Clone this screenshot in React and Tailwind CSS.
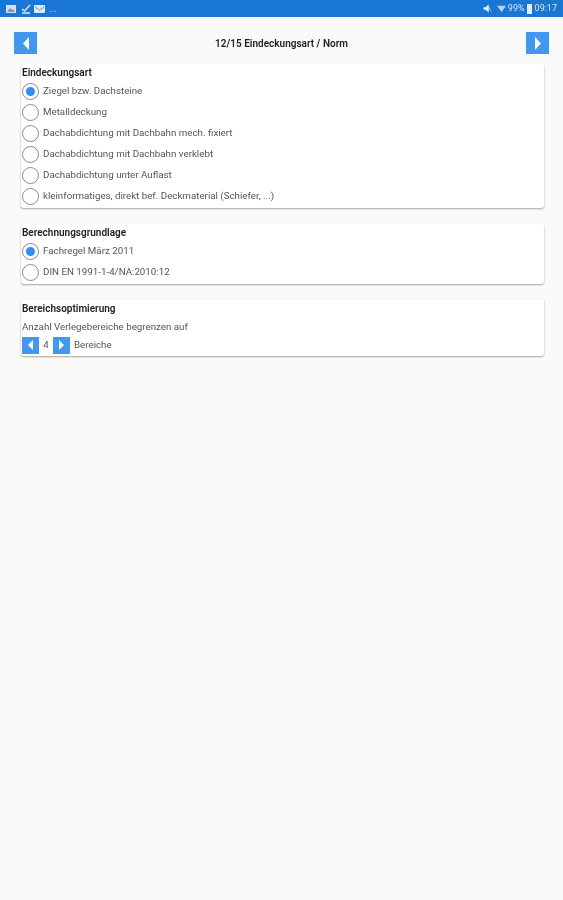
import React from 'react';

const Arrow = ({ dir, size = 'big' }) => (
  <button className={`flex items-center justify-center bg-[#4298ee] ${size === 'big' ? 'w-[23px] h-[22px]' : 'w-[17px] h-[17px]'}`}>
    <svg viewBox="0 0 10 16" preserveAspectRatio="none" className={size === 'big' ? 'w-[6px] h-[13px]' : 'w-[5px] h-[10px]'}>
      <path d={dir === 'left' ? 'M10 0V16L0 8Z' : 'M0 0V16L10 8Z'} fill="#fff" />
    </svg>
  </button>
);

const Radio = ({ label, checked }) => (
  <div className="flex items-center h-[21px]">
    <span className="flex items-center justify-center w-[17px] h-[17px] rounded-full border border-[#8a8a8a] bg-white">
      {checked && <span className="w-[9px] h-[9px] rounded-full bg-[#2f8ff0]" />}
    </span>
    <span className="ml-[4px] text-[9.75px] text-[#555]">{label}</span>
  </div>
);

const Card = ({ title, children, className }) => (
  <div className={`bg-white rounded-[3px] shadow-[0_1px_2px_rgba(0,0,0,0.35)] pl-[1px] ${className}`}>
    <div className="text-[10px] font-semibold text-[#222] leading-[14px]">{title}</div>
    {children}
  </div>
);

export default function App() {
  return (
    <div className="min-h-[900px] bg-[#fafafa] font-['Roboto',sans-serif] blur-[0.6px]">
      <div className="h-[17px] bg-[#1976d2] flex items-center justify-between pl-[6px] pr-[6px]">
        <div className="flex items-center">
          <svg viewBox="0 0 10 10" className="w-[10px] h-[10px]">
            <rect x="0" y="1" width="10" height="8" fill="#cfe2f5" />
            <path d="M1 8L4 4L6 6L7 5L9 8Z" fill="#5f9ddc" />
          </svg>
          <svg viewBox="0 0 10 10" className="w-[10px] h-[10px] ml-[5px]">
            <path d="M1 5L3.5 7L9 1M1 9H9" fill="none" stroke="#dbe9f7" strokeWidth="1.4" />
          </svg>
          <svg viewBox="0 0 11 10" className="w-[11px] h-[10px] ml-[3px]">
            <rect x="0" y="1" width="11" height="8" rx="1" fill="#dbe9f7" />
            <path d="M1 3L5.5 6L10 3" fill="none" stroke="#5f9ddc" strokeWidth="1" />
          </svg>
          <span className="ml-[4px] text-[10px] leading-none text-[#a9cbee]">...</span>
        </div>
        <div className="flex items-center text-[9px] text-[#d5e5f6]">
          <svg viewBox="0 0 10 10" className="w-[9px] h-[9px]">
            <path d="M1 4H3L6 1V9L3 6H1ZM6 3L9 8" fill="#e3eefa" stroke="#e3eefa" strokeWidth="0.8" />
          </svg>
          <svg viewBox="0 0 10 10" className="w-[9px] h-[9px] ml-[5px]">
            <path d="M0 2H10L5 9Z" fill="#b9d4f0" />
          </svg>
          <span className="ml-[2px]">99%</span>
          <span className="w-[5px] h-[10px] bg-[#e3eefa] ml-[2px]" />
          <span className="ml-[3px]">09:17</span>
        </div>
      </div>
      <div className="flex items-center justify-between pl-[14px] pr-[14px] mt-[15px]">
        <Arrow dir="left" />
        <div className="text-[10px] font-semibold text-[#222]">12/15 Eindeckungsart / Norm</div>
        <Arrow dir="right" />
      </div>
      <div className="ml-[21px] w-[523px] mt-[10px] flex flex-col">
        <Card title="Eindeckungsart" className="pt-[2px] pb-[1px]">
          <div className="mt-[0.5px]">
            <Radio checked label="Ziegel bzw. Dachsteine" />
            <Radio label="Metalldeckung" />
            <Radio label="Dachabdichtung mit Dachbahn mech. fixiert" />
            <Radio label="Dachabdichtung mit Dachbahn verklebt" />
            <Radio label="Dachabdichtung unter Auflast" />
            <Radio label="kleinformatiges, direkt bef. Deckmaterial (Schiefer, ...)" />
          </div>
        </Card>
        <Card title="Berechnungsgrundlage" className="mt-[16px] pt-[2px] pb-[1px]">
          <div className="mt-[1px]">
            <Radio checked label="Fachregel März 2011" />
            <Radio label="DIN EN 1991-1-4/NA:2010:12" />
          </div>
        </Card>
        <Card title="Bereichsoptimierung" className="mt-[15px] pt-[3px] pb-[2px]">
          <div className="text-[9.75px] text-[#555] leading-[12px] mt-[5px]">Anzahl Verlegebereiche begrenzen auf</div>
          <div className="flex items-center mt-[4px]">
            <Arrow dir="left" size="small" />
            <span className="w-[14px] text-center text-[9.75px] text-[#555]">4</span>
            <Arrow dir="right" size="small" />
            <span className="ml-[4px] text-[9.75px] text-[#555]">Bereiche</span>
          </div>
        </Card>
      </div>
    </div>
  );
}
